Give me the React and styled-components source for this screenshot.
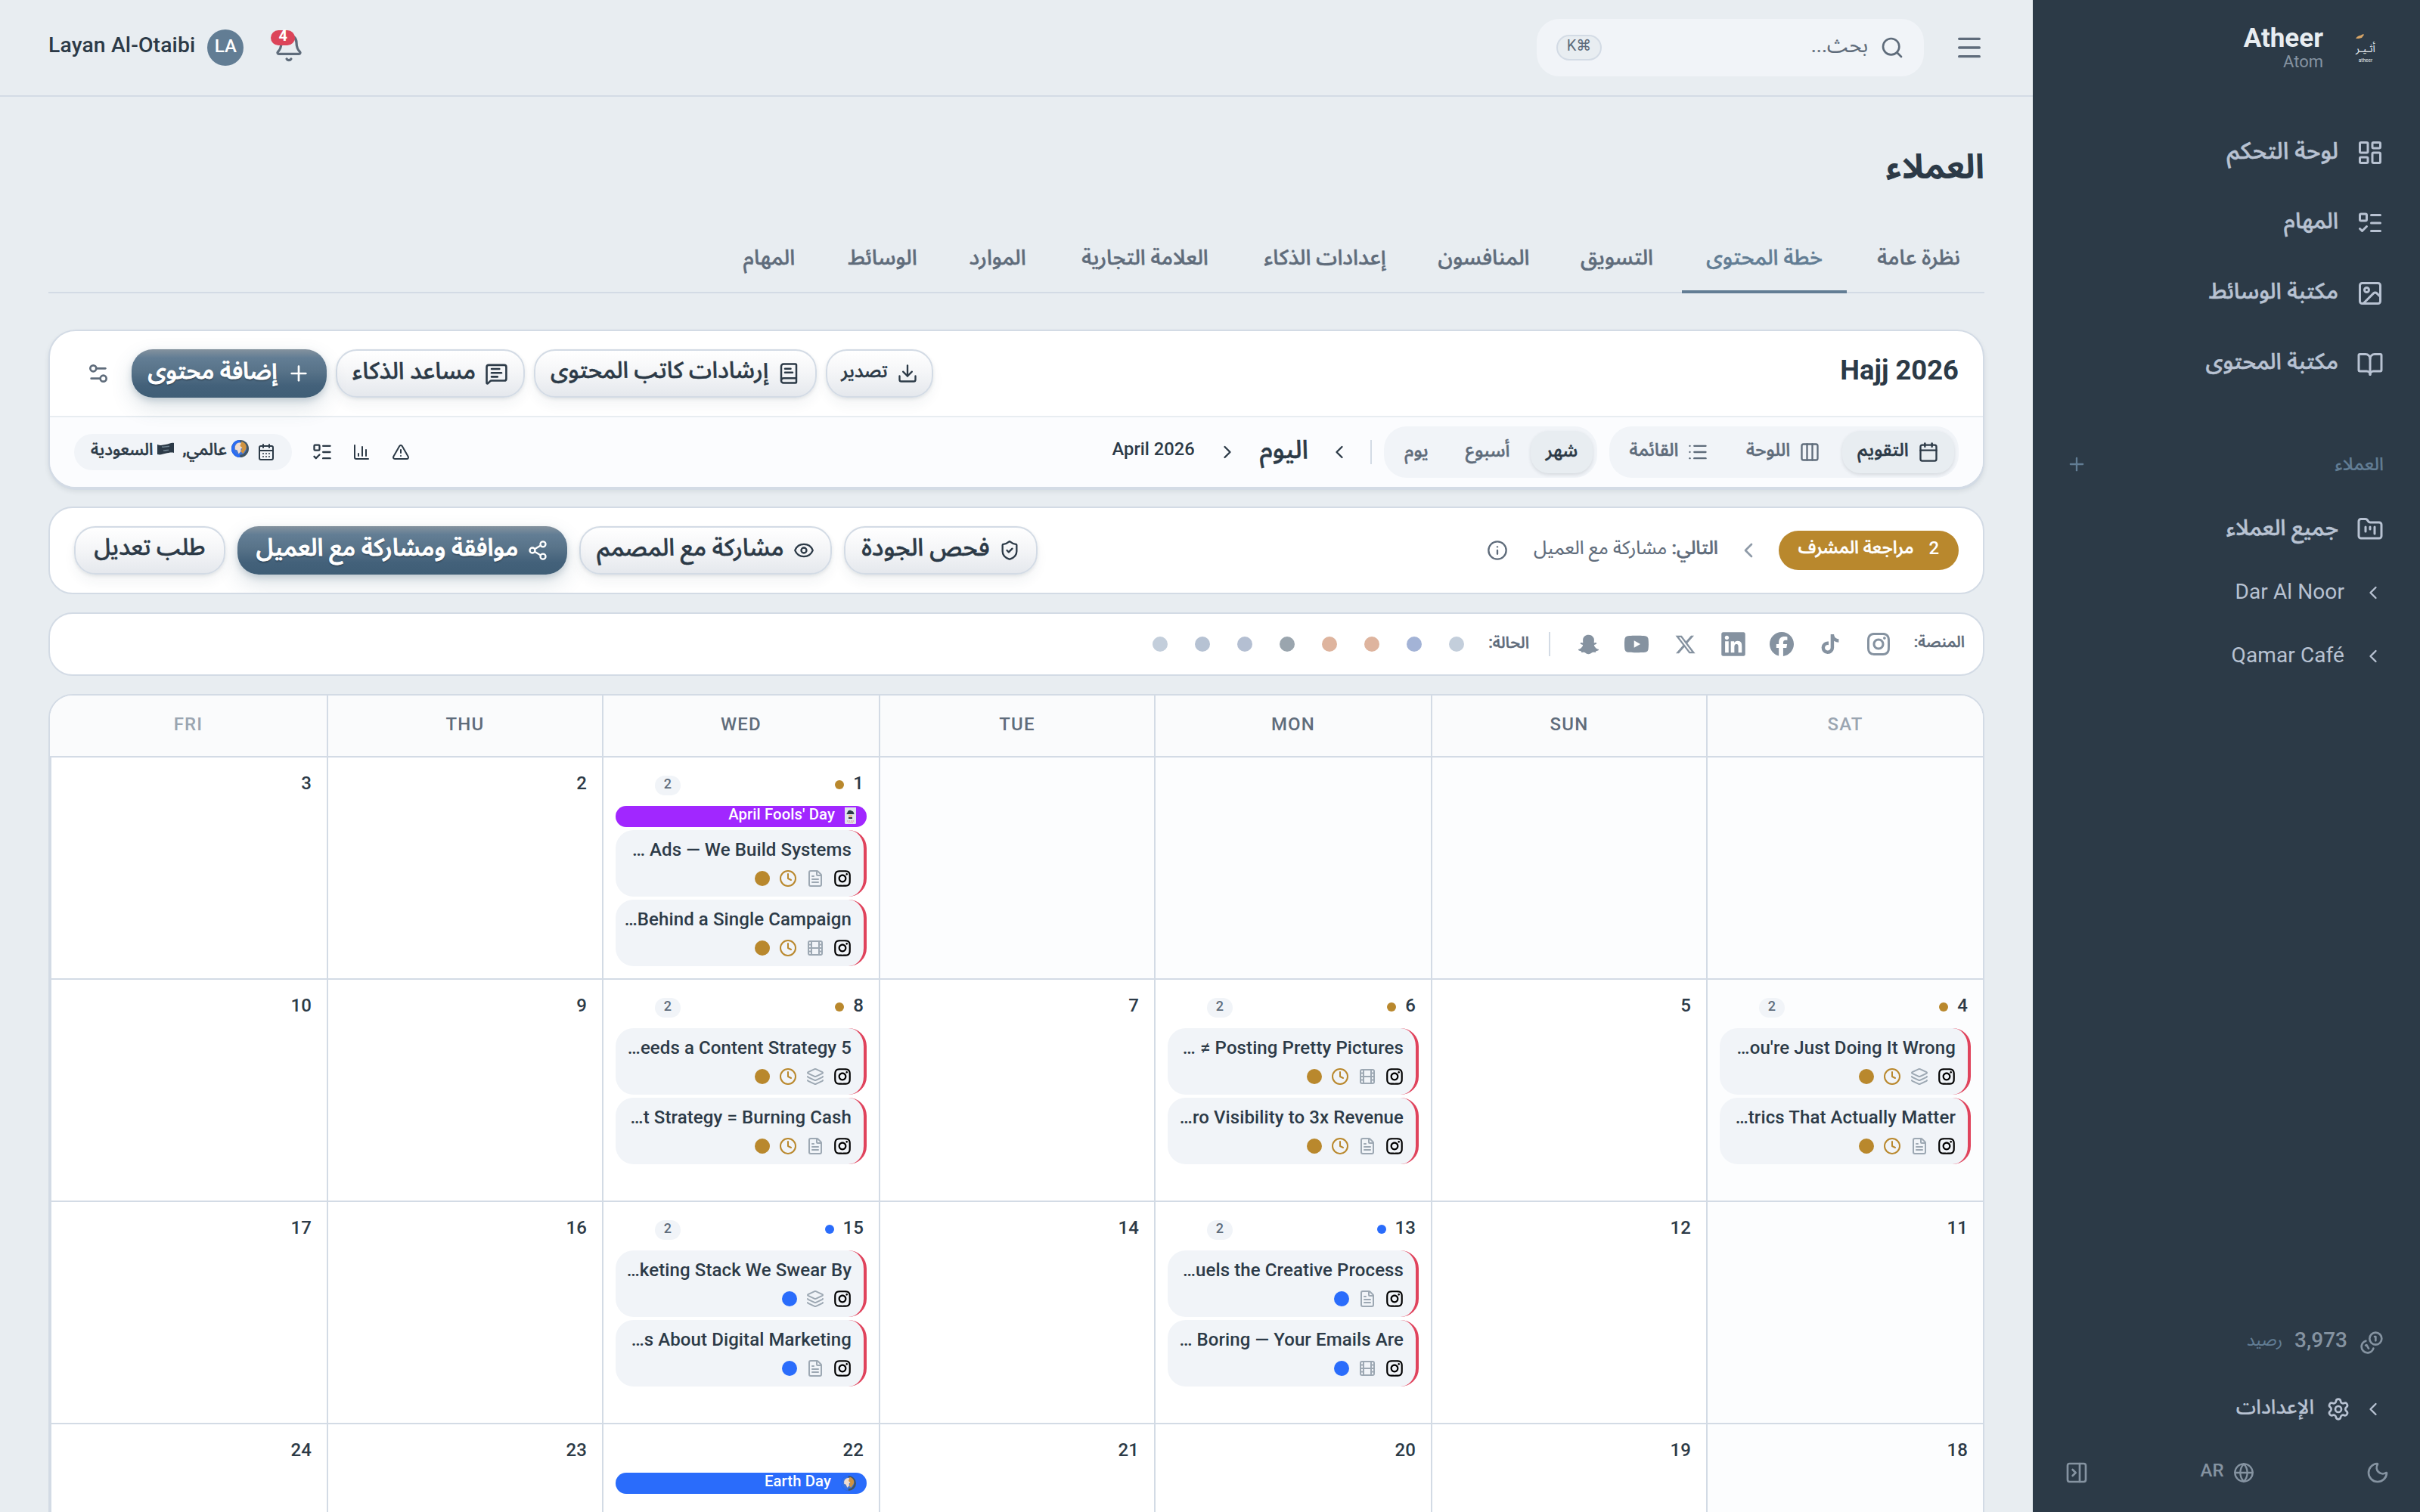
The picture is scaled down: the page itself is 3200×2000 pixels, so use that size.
import React from "react";
import styled, {createGlobalStyle, css} from "styled-components";
import {
    Bell, BookOpen, BookText, Calendar, CalendarDays, ChartColumn, ChevronLeft, ChevronRight, Clock,
    Columns3, Download, Eye, FileText, Film, FolderKanban, Globe, Image, Info, Layers, LayoutDashboard, List,
    ListTodo, Menu, MessageSquareText, Moon, PanelRightClose, Plus, Search, Settings, Settings2, Share2,
    ShieldCheck, TriangleAlert
} from "lucide-react";
import {RiInstagramLine} from "react-icons/ri";
import {FaSnapchatGhost} from "react-icons/fa";
import {FaLinkedin, FaTiktok, FaXTwitter} from "react-icons/fa6";
import {SiFacebook, SiYoutube} from "react-icons/si";


const colors = {
    ink: '#2c3a47',
    slate: '#5f6c7b',
    steel: '#627d94',
    line: '#d3dbe5',
    page: '#e8edf1',
    soft: '#f1f4f8',
    amber: '#b9882d',
    blue: '#2a6cfb',
    red: '#e0435c',
    purple: '#a127ff',
}

const GlobalStyle = createGlobalStyle`
    * {
        box-sizing: border-box;
    }

    body {
        margin: 0;
        background: ${colors.page};
        color: ${colors.ink};
        font-family: Roboto, "Noto Sans Arabic", "DejaVu Sans", sans-serif;
        font-size: 24px;
        overflow: hidden;
    }

    svg {
        flex: none;
        display: block;
    }
`

const Screen = styled.div`
    display: flex;
    width: 3200px;
    height: 2000px;
    overflow: hidden;
`

/* line box sits slightly above the centre of its row */
const Label = styled.span`
    display: block;
    flex: none;
    line-height: 1;
    padding-bottom: ${p => p.$lift ?? 0.25}em;
    white-space: nowrap;
    font-size: ${p => p.$size || 24}px;
    font-weight: ${p => p.$weight || 500};
    color: ${p => p.$color || 'inherit'};
    -webkit-text-stroke: ${p => p.$stroke ?? 0.5}px currentColor;
`

const LatinLabel = styled(Label).attrs({dir: 'ltr'})`
    letter-spacing: ${p => p.$track ?? 0.1}px;
    -webkit-text-stroke: 0;
`

const Spacer = styled.div`
    flex: 1;
`

/* ---------- sidebar ---------- */

const Sidebar = styled.aside`
    width: 512px;
    flex: none;
    display: flex;
    flex-direction: column;
    background: ${colors.ink};
    color: #b8c2d2;
`

const Brand = styled.div`
    display: flex;
    height: 128px;
    padding: 32px 44px 0 0;
`

const BrandLogo = styled.svg`
    width: 56px;
    height: 64px;
`

const BrandText = styled.div`
    display: flex;
    flex-direction: column;
    align-items: flex-start;
    margin-right: 28px;
`

const BrandName = styled.div`
    font-size: 35px;
    line-height: 38px;
    font-weight: 700;
    color: ${colors.page};
`

const BrandPlan = styled.div`
    font-size: 22px;
    line-height: 22px;
    margin-top: 1px;
    color: #8593a1;
`

const NavList = styled.nav`
    display: flex;
    flex-direction: column;
    padding: 27px 48px 0 0;
`

const NavItem = styled.a`
    display: flex;
    align-items: center;
    gap: 24px;
    height: 93.3px;
`

const SectionHead = styled.div`
    display: flex;
    align-items: center;
    justify-content: space-between;
    height: 56px;
    margin-top: 58px;
    padding: 0 48px 0 44px;
    color: ${colors.steel};
`

const ClientList = styled.div`
    display: flex;
    flex-direction: column;
    padding: 16px 48px 0 0;
`

const ClientRow = styled.a`
    display: flex;
    align-items: center;
    gap: 24px;
    height: 84px;
`

const SidebarFoot = styled.div`
    margin-top: auto;
    display: flex;
    flex-direction: column;
`

const FootRow = styled.div`
    display: flex;
    align-items: center;
    height: ${p => p.$height}px;
    gap: 16px;
    padding-right: 48px;
`

const FootBar = styled.div`
    display: flex;
    align-items: center;
    justify-content: space-between;
    height: 84px;
    margin-bottom: 10px;
    padding: 0 40px 0 42px;
    color: #8593a1;
`

const LangSwitch = styled.div`
    display: flex;
    align-items: center;
    gap: 12px;
`

/* ---------- top bar ---------- */

const Main = styled.main`
    width: 2688px;
    height: 2000px;
    flex: none;
    overflow: hidden;
`

const TopBar = styled.header`
    display: flex;
    align-items: center;
    height: 128px;
    padding: 0 64px;
    border-bottom: 2px solid ${colors.line};
    color: ${colors.slate};
`

const SearchBox = styled.div`
    display: flex;
    align-items: center;
    width: 512px;
    height: 76px;
    margin-right: 40px;
    padding: 0 26px;
    gap: 16px;
    border-radius: 30px;
    background: ${colors.soft};
`

const Kbd = styled.kbd`
    display: flex;
    align-items: center;
    justify-content: center;
    width: 60px;
    height: 34px;
    border: 2px solid ${colors.line};
    border-radius: 17px;
    background: ${colors.page};
    font-family: inherit;
`

const BellWrap = styled.div`
    position: relative;
    margin-left: 40px;
`

const BellBadge = styled.span`
    position: absolute;
    left: -4px;
    top: -3px;
    width: 32px;
    height: 20px;
    border-radius: 10px;
    background: #dc4459;
    color: #ffffff;
    font-size: 20px;
    font-weight: 700;
    line-height: 15px;
    text-align: center;
`

const Avatar = styled.div`
    display: flex;
    align-items: center;
    justify-content: center;
    width: 48px;
    height: 48px;
    margin-left: 16px;
    border-radius: 50%;
    background: ${colors.steel};
    color: #ffffff;
`

/* ---------- page ---------- */

const Page = styled.div`
    padding: 0 64px;
`

const PageTitle = styled.h1`
    margin: 0;
    height: 180px;
    padding-top: 65px;
    font-size: 45px;
    line-height: 56px;
    font-weight: 700;
`

const TabBar = styled.div`
    display: flex;
    gap: 8px;
    height: 80px;
    border-bottom: 2px solid ${colors.line};
`

const Tab = styled.a`
    display: flex;
    align-items: center;
    width: ${p => p.$width}px;
    justify-content: center;
    height: 80px;
    padding-bottom: 7px;
    color: ${p => p.$active ? colors.steel : colors.slate};
    ${p => p.$active && css`box-shadow: inset 0 -4px 0 ${colors.steel};`}
`

const Card = styled.section`
    border: 2px solid ${colors.line};
    border-radius: ${p => p.$radius || 32}px;
    background: #ffffff;
    overflow: hidden;
`

const PlanCard = styled(Card)`
    margin-top: 48px;
    height: 210px;
    box-shadow: 0 2px 0 ${colors.line}, 0 4px 6px rgba(44, 58, 71, 0.10);
`

const PlanHead = styled.div`
    display: flex;
    align-items: center;
    gap: 12px;
    height: 114px;
    padding: 0 32px;
    border-bottom: 2px solid ${colors.page};
`

const PlanTools = styled.div`
    display: flex;
    align-items: center;
    height: 92px;
    padding: 0 32px;
    background: #fbfcfe;
`

const Button = styled.button`
    display: flex;
    align-items: center;
    justify-content: center;
    flex: none;
    gap: 12px;
    width: ${p => p.$width}px;
    height: 64px;
    padding: 0;
    border: 2px solid ${colors.line};
    border-radius: 28px;
    background: linear-gradient(180deg, #ffffff 0%, #f4f5f7 50%, #e5e8ed 100%);
    box-shadow: 0 2px 4px rgba(44, 58, 71, 0.10), 0 10px 16px rgba(44, 58, 71, 0.05);
    color: ${colors.ink};
    font-family: inherit;
    ${p => p.$primary && css`
        border: none;
        background: linear-gradient(180deg, #84929e 0%, #627d94 18%, #587389 45%, #43617a 75%, #3f5e76 100%);
        box-shadow: 0 4px 8px rgba(63, 94, 118, 0.22), 0 12px 28px rgba(63, 94, 118, 0.18);
        color: #ffffff;
        text-shadow: 0 2px 2px rgba(0, 0, 0, 0.3);
    `}
`

const IconButton = styled.button`
    display: flex;
    align-items: center;
    justify-content: center;
    flex: none;
    width: ${p => p.$width || 52}px;
    height: 56px;
    padding: 0;
    border: none;
    background: none;
    color: ${p => p.$color || colors.ink};
`

const Segments = styled.div`
    display: flex;
    gap: 8px;
    height: 68px;
    padding: 6px;
    margin-left: 16px;
    border-radius: 30px;
    background: ${colors.soft};
`

const Segment = styled.div`
    display: flex;
    align-items: center;
    justify-content: center;
    gap: 12px;
    width: ${p => p.$width}px;
    height: 56px;
    border-radius: 24px;
    color: ${p => p.$active ? colors.ink : colors.slate};
    ${p => p.$active && css`
        background: ${colors.page};
        box-shadow: 0 2px 4px rgba(44, 58, 71, 0.14);
    `}
`

const VLine = styled.div`
    width: 2px;
    height: 32px;
    background: ${colors.line};
`

const RegionPill = styled.div`
    display: flex;
    align-items: center;
    width: 288px;
    height: 48px;
    margin-right: 14px;
    padding: 0 22px;
    border-radius: 24px;
    background: ${colors.soft};
`

const Region = styled.div`
    display: flex;
    align-items: center;
    gap: 6px;
    margin-right: 11px;

    svg {
        margin-bottom: 9px;
    }
`

const FlowCard = styled(Card)`
    display: flex;
    align-items: center;
    height: 116px;
    margin-top: 24px;
    padding: 0 32px;
`

const FlowButtons = styled.div`
    display: flex;
    gap: 16px;
`

const StagePill = styled.div`
    display: flex;
    align-items: center;
    justify-content: center;
    gap: 20px;
    width: 238px;
    height: 52px;
    border-radius: 26px;
    background: ${colors.amber};
    color: #ffffff;
`

const FilterCard = styled(Card)`
    display: flex;
    align-items: center;
    height: 84px;
    margin-top: 24px;
    padding: 0 24px;
`

const FilterName = styled(Label)`
    width: ${p => p.$width}px;
    margin-right: ${p => p.$gap || 0}px;
    color: ${colors.slate};
`

const PlatformList = styled.div`
    display: flex;
    width: 448px;
    margin: 0 12px 0 18px;
    color: #8592a0;
`

const Platform = styled.div`
    display: flex;
    align-items: center;
    justify-content: center;
    width: 64px;
    height: 64px;
`

const StatusList = styled.div`
    display: flex;
    gap: 36px;
    margin-right: 30px;
`

const Dot = styled.i`
    display: block;
    flex: none;
    width: ${p => p.$size || 20}px;
    height: ${p => p.$size || 20}px;
    border-radius: 50%;
    background: ${p => p.$color};
`

/* ---------- calendar ---------- */

const CalendarCard = styled(Card)`
    margin-top: 24px;
    height: 1200px;
`

const weekColumns = '366px 364px 366px 364px 366px 364px 366px'

const WeekHead = styled.div`
    display: grid;
    grid-template-columns: ${weekColumns};
    height: 82px;
    border-bottom: 2px solid ${colors.line};
    background: #fafbfc;
`

const DayName = styled.div`
    display: flex;
    align-items: center;
    justify-content: center;
    color: ${p => p.$muted ? '#9aa5b1' : colors.slate};
    border-left: 2px solid ${colors.line};

    &:last-child {
        border-left: none;
    }
`

const MonthGrid = styled.div`
    display: grid;
    grid-template-columns: ${weekColumns};
    grid-auto-rows: 294px;
`

const DayCell = styled.div`
    display: flex;
    flex-direction: column;
    gap: 4px;
    min-width: 0;
    padding: 16px;
    border-left: 2px solid ${colors.line};
    border-bottom: 2px solid ${colors.line};
    background: ${p => p.$tint ? '#fcfdfe' : '#ffffff'};
`

const DayHead = styled.div`
    display: flex;
    align-items: center;
    gap: 12px;
    flex: none;
    height: 40px;
    margin-bottom: 4px;
    padding: 0 4px 0 52px;
`

const CountBadge = styled.div`
    display: flex;
    align-items: center;
    justify-content: center;
    width: 34px;
    height: 26px;
    border-radius: 13px;
    background: ${colors.soft};
    color: ${colors.slate};
    margin-top: 2px;
`

const Holiday = styled.div`
    display: flex;
    align-items: center;
    gap: 13px;
    flex: none;
    height: 28px;
    padding: 0 14px;
    border-radius: 14px;
    background: ${p => p.$color};
    color: #ffffff;
    overflow: hidden;
`

const PostCard = styled.div`
    display: flex;
    flex-direction: column;
    align-items: flex-start;
    flex: none;
    height: 88px;
    padding: 14px 16px 0 16px;
    border-right: 4px solid ${colors.red};
    border-radius: 24px;
    background: ${colors.soft};
`

const PostMeta = styled.div`
    display: flex;
    align-items: center;
    gap: 12px;
    height: 24px;
    margin-top: 8px;
    color: #9da8b3;
`

const InstaMark = styled(RiInstagramLine)`
    width: 26px;
    height: 26px;
    margin: 0 -1px;
    color: #000000;
`

const NAV = [
    {icon: LayoutDashboard, text: 'لوحة التحكم', size: 31},
    {icon: ListTodo, text: 'المهام', size: 29.5},
    {icon: Image, text: 'مكتبة الوسائط', size: 29.5},
    {icon: BookOpen, text: 'مكتبة المحتوى', size: 29.5},
]

const TABS = [
    {text: 'نظرة عامة', width: 174},
    {text: 'خطة المحتوى', width: 218, active: true},
    {text: 'التسويق', width: 156},
    {text: 'المنافسون', width: 180},
    {text: 'إعدادات الذكاء', width: 224},
    {text: 'العلامة التجارية', width: 236},
    {text: 'الموارد', width: 138},
    {text: 'الوسائط', width: 150},
    {text: 'المهام', width: 134},
]

const VIEWS = [
    {icon: Calendar, text: 'التقويم', width: 148, active: true},
    {icon: Columns3, text: 'اللوحة', width: 140},
    {icon: List, text: 'القائمة', width: 146},
]

const RANGES = [
    {text: 'شهر', width: 82, active: true},
    {text: 'أسبوع', width: 98},
    {text: 'يوم', width: 74},
]

const STATUSES = ['#c3cedb', '#a3b3d6', '#deb49e', '#deb49e', '#9aa5ae', '#b4bfd2', '#b6c2d3', '#c3cedb']

const WEEK = ['SAT', 'SUN', 'MON', 'TUE', 'WED', 'THU', 'FRI']

const amberPosts = (items) => ({dot: colors.amber, posts: items.map(([title, icon]) => ({title, icon, late: true}))})
const bluePosts = (items) => ({dot: colors.blue, posts: items.map(([title, icon]) => ({title, icon}))})

const DAYS = {
    1: {
        holiday: {mark: 'joker', text: "April Fools' Day", color: colors.purple},
        ...amberPosts([['… Ads — We Build Systems', FileText], ['…Behind a Single Campaign', Film]]),
    },
    4: amberPosts([["…ou're Just Doing It Wrong", Layers], ['…trics That Actually Matter', FileText]]),
    6: amberPosts([['… ≠ Posting Pretty Pictures', Film], ['…ro Visibility to 3x Revenue', FileText]]),
    8: amberPosts([['…eeds a Content Strategy 5', Layers], ['…t Strategy = Burning Cash', FileText]]),
    13: bluePosts([['…uels the Creative Process', FileText], ['… Boring — Your Emails Are', Film]]),
    15: bluePosts([['…keting Stack We Swear By', Layers], ['…s About Digital Marketing', FileText]]),
    22: {holiday: {mark: 'globe', text: 'Earth Day', color: colors.blue}},
}

const EarthMark = ({size}) => (
    <svg width={size} height={size} viewBox="0 0 24 24">
        <circle cx="12" cy="12" r="12" fill="#3f5566"/>
        <path d="M12 0A12 12 0 0 0 4 21c3 2 5 3 8 3-1-8-2-16 0-24z" fill="#2a6cf5"/>
        <circle cx="12" cy="11.500" r="9" fill="#3f74d8"/>
        <path d="M5 9c1-4 5-6 8-5l2 3 1 4-3 1 0 4-3 3-2-5-3-1z" fill="#f1ddd0"/>
        <path d="M14 2c5 1 8 6 6 11l-4 6-3-3 2-5-3-3z" fill="#cf9340"/>
    </svg>
)

const FlagMark = () => (
    <svg width="22" height="17" viewBox="0 0 22 17">
        <path d="M0 3c4 1.500 7 .8 11 0S19 0 22 1v13c-3-1-7-.2-11 .8S4 17 0 16z" fill="#2c3a47"/>
        <path d="M6 6c4 1 6-.5 10-.8M8 11c3 .5 5-.6 7-.8" stroke="#6f8290" strokeWidth="1.500" fill="none"/>
    </svg>
)

const JokerMark = () => (
    <svg width="15" height="24" viewBox="0 0 15 24">
        <rect x="0" y="-2" width="15" height="24" rx="1.500" fill="#dfe5ec"/>
        <path d="M3 8c1-4 3-5 5-4s4 1 4 4l1 1H2z" fill="#2c3a47"/>
        <rect x="5" y="10" width="5" height="3" fill="#e9bd9a"/>
        <rect x="5" y="13" width="5" height="2" fill="#2c3a47"/>
        <path d="M3 18h9M5 20h6" stroke="#d98a90" strokeWidth="1.200" strokeDasharray="1.500 1"/>
    </svg>
)

/* full coin top right, the covered one bottom left */
const CoinsMark = () => (
    <svg width="32" height="32" viewBox="0 0 24 24" fill="none" stroke="#8593a1" strokeWidth="2"
         strokeLinecap="round" strokeLinejoin="round">
        <path d="M13.744 17.736a6 6 0 1 1-7.480-7.480"/>
        <path d="M15 6h1v4"/>
        <path d="m6.134 14.768.866-.5 2 3.464"/>
        <circle cx="16" cy="8" r="6"/>
    </svg>
)

const Post = ({title, icon: Icon, late}) => (
    <PostCard>
        <LatinLabel>{title}</LatinLabel>
        <PostMeta>
            <InstaMark/>
            <Icon size={24}/>
            {late && <Clock size={24} color={colors.amber}/>}
            <Dot $color={late ? colors.amber : colors.blue}/>
        </PostMeta>
    </PostCard>
)

const Day = ({number, tint}) => {
    const data = DAYS[number] || {};

    return (
        <DayCell $tint={tint}>
            {number &&
                <DayHead>
                    <LatinLabel $lift={0.15}>{number}</LatinLabel>
                    {data.dot && <Dot $size={12} $color={data.dot}/>}
                    <Spacer/>
                    {data.posts && <CountBadge><LatinLabel $size={18}>{data.posts.length}</LatinLabel></CountBadge>}
                </DayHead>
            }
            {data.holiday &&
                <Holiday $color={data.holiday.color}>
                    {data.holiday.mark === 'joker' ? <JokerMark/> : <EarthMark size={20}/>}
                    <LatinLabel $size={20.3}>{data.holiday.text}</LatinLabel>
                </Holiday>
            }
            {data.posts?.map((post) => <Post key={post.title} {...post}/>)}
        </DayCell>
    )
}

const SideNav = () => (
    <Sidebar>
        <Brand>
            <BrandLogo viewBox="0 0 56 64">
                <path d="M15 19c2-3 4-4 6-4l4-2 1 1-3 4-4 1z" fill="#d8a566"/>
                <text x="28" y="37" fontSize="14" textAnchor="middle" fill="#e8edf1" direction="rtl">أثـيـر</text>
                <text x="28" y="50" fontSize="6.500" textAnchor="middle" fill="#e8edf1" direction="ltr">atheer</text>
            </BrandLogo>
            <BrandText>
                <BrandName>Atheer</BrandName>
                <BrandPlan>Atom</BrandPlan>
            </BrandText>
        </Brand>
        <NavList>
            {NAV.map(({icon: Icon, text, size}) => (
                <NavItem key={text}>
                    <Icon size={36}/>
                    <Label $size={size} $lift={0.16}>{text}</Label>
                </NavItem>
            ))}
        </NavList>
        <SectionHead>
            <Label $size={24} $lift={0} $stroke={0.2}>العملاء</Label>
            <Plus size={28}/>
        </SectionHead>
        <ClientList>
            <ClientRow>
                <FolderKanban size={36}/>
                <Label $size={29.3} $lift={0.12}>جميع العملاء</Label>
            </ClientRow>
            {['Dar Al Noor', 'Qamar Café'].map((name) => (
                <ClientRow key={name}>
                    <ChevronLeft size={28}/>
                    <LatinLabel $size={28} $weight={400} $lift={0.12}>{name}</LatinLabel>
                </ClientRow>
            ))}
        </ClientList>
        <SidebarFoot>
            <FootRow $height={92}>
                <CoinsMark/>
                <LatinLabel $size={28} $track={0} $color="#8593a1">3,973</LatinLabel>
                <Label $size={22} $weight={400} $stroke={0.2} $color={colors.steel}>رصيد</Label>
            </FootRow>
            <FootRow $height={84}>
                <ChevronLeft size={28}/>
                <Settings size={32}/>
                <Label $size={26.5} $lift={0.22} $stroke={0.2}>الإعدادات</Label>
            </FootRow>
            <FootBar>
                <Moon size={32}/>
                <LangSwitch>
                    <Globe size={28}/>
                    <LatinLabel>AR</LatinLabel>
                </LangSwitch>
                <PanelRightClose size={32}/>
            </FootBar>
        </SidebarFoot>
    </Sidebar>
)

const Header = () => (
    <TopBar>
        <Menu size={40}/>
        <SearchBox>
            <Search size={32}/>
            <Label $size={27} $lift={0.2} $weight={400} $stroke={0.2}>بحث...</Label>
            <Spacer/>
            <Kbd><Label $size={20} $lift={0.3} $weight={400} $stroke={0}>⌘K</Label></Kbd>
        </SearchBox>
        <Spacer/>
        <BellWrap>
            <Bell size={40}/>
            <BellBadge>4</BellBadge>
        </BellWrap>
        <Avatar><LatinLabel $lift={0.15}>LA</LatinLabel></Avatar>
        <LatinLabel $size={28.3} $lift={0.17} $track={0.15} $color={colors.ink}>Layan Al-Otaibi</LatinLabel>
    </TopBar>
)

const App = () => {
    return (
        <Screen dir="rtl">
            <GlobalStyle/>
            <SideNav/>
            <Main>
                <Header/>
                <Page>
                    <PageTitle>العملاء</PageTitle>
                    <TabBar>
                        {TABS.map((tab) => (
                            <Tab key={tab.text} $width={tab.width} $active={tab.active}>
                                <Label $size={28}>{tab.text}</Label>
                            </Tab>
                        ))}
                    </TabBar>

                    <PlanCard $radius={36}>
                        <PlanHead>
                            <LatinLabel $size={36.4} $lift={0.2} $weight={700} $track={0}>Hajj 2026</LatinLabel>
                            <Spacer/>
                            <Button $width={142}><Download size={28}/><Label>تصدير</Label></Button>
                            <Button $width={374}><BookText size={30}/><Label $size={30.3}>إرشادات كاتب المحتوى</Label></Button>
                            <Button $width={250}><MessageSquareText size={31}/><Label $size={31}>مساعد الذكاء</Label></Button>
                            <Button $width={258} $primary><Plus size={32}/><Label $size={31} $stroke={0.9}>إضافة محتوى</Label></Button>
                            <IconButton $width={64} $color={colors.slate}><Settings2 size={32}/></IconButton>
                        </PlanHead>
                        <PlanTools>
                            <Segments>
                                {VIEWS.map(({icon: Icon, ...view}) => (
                                    <Segment key={view.text} $width={view.width} $active={view.active}>
                                        <Icon size={28}/>
                                        <Label>{view.text}</Label>
                                    </Segment>
                                ))}
                            </Segments>
                            <Segments>
                                {RANGES.map((range) => (
                                    <Segment key={range.text} $width={range.width} $active={range.active}>
                                        <Label $lift={0.2}>{range.text}</Label>
                                    </Segment>
                                ))}
                            </Segments>
                            <VLine/>
                            <IconButton $width={82}><ChevronLeft size={28}/></IconButton>
                            <Label $size={34}>اليوم</Label>
                            <IconButton $width={86}><ChevronRight size={28}/></IconButton>
                            <LatinLabel $size={23.7} $track={0}>April 2026</LatinLabel>
                            <Spacer/>
                            <IconButton><TriangleAlert size={24}/></IconButton>
                            <IconButton><ChartColumn size={24}/></IconButton>
                            <IconButton><ListTodo size={28}/></IconButton>
                            <RegionPill>
                                <CalendarDays size={24}/>
                                <Region>
                                    <EarthMark size={23}/>
                                    <Label $size={22}>عالمي,</Label>
                                </Region>
                                <Region>
                                    <FlagMark/>
                                    <Label $size={22}>السعودية</Label>
                                </Region>
                            </RegionPill>
                        </PlanTools>
                    </PlanCard>

                    <FlowCard>
                        <StagePill>
                            <LatinLabel>2</LatinLabel>
                            <Label $size={23.7}>مراجعة المشرف</Label>
                        </StagePill>
                        <IconButton $width={80} $color="#8f9ba8"><ChevronLeft size={32}/></IconButton>
                        <Label $size={24.7} $lift={0.2} $color={colors.slate}>التالي:&nbsp;</Label>
                        <Label $size={24.7} $lift={0.2} $weight={400} $stroke={0.2} $color={colors.slate}>مشاركة مع العميل</Label>
                        <IconButton $width={95} $color={colors.slate}><Info size={28}/></IconButton>
                        <Spacer/>
                        <FlowButtons>
                            <Button $width={256}><ShieldCheck size={28}/><Label $size={32} $lift={0.22}>فحص الجودة</Label></Button>
                            <Button $width={334}><Eye size={28}/><Label $size={31.5} $lift={0.22}>مشاركة مع المصمم</Label></Button>
                            <Button $width={436} $primary><Share2 size={28}/><Label $size={32} $lift={0.22} $stroke={0.9}>موافقة ومشاركة مع العميل</Label></Button>
                            <Button $width={200}><Label $size={30.5} $lift={0.22}>طلب تعديل</Label></Button>
                        </FlowButtons>
                    </FlowCard>

                    <FilterCard>
                        <FilterName $size={21} $width={70}>المنصة:</FilterName>
                        <PlatformList>
                            <Platform><RiInstagramLine size={36}/></Platform>
                            <Platform><FaTiktok size={26}/></Platform>
                            <Platform><SiFacebook size={32}/></Platform>
                            <Platform><FaLinkedin size={36}/></Platform>
                            <Platform><FaXTwitter size={29}/></Platform>
                            <Platform><SiYoutube size={32}/></Platform>
                            <Platform><FaSnapchatGhost size={27}/></Platform>
                        </PlatformList>
                        <VLine/>
                        <FilterName $size={21.5} $width={56} $gap={26}>الحالة:</FilterName>
                        <StatusList>
                            {STATUSES.map((color, i) => <Dot key={i} $color={color}/>)}
                        </StatusList>
                    </FilterCard>

                    <CalendarCard>
                        <WeekHead>
                            {WEEK.map((name) => (
                                <DayName key={name} $muted={name === 'SAT' || name === 'FRI'}>
                                    <LatinLabel $lift={0.2} $track={1.2}>{name}</LatinLabel>
                                </DayName>
                            ))}
                        </WeekHead>
                        <MonthGrid>
                            {Array.from({length: 28}, (_, i) => (
                                <Day key={i} number={i > 3 ? i - 3 : null} tint={i < 4 || i % 7 === 0}/>
                            ))}
                        </MonthGrid>
                    </CalendarCard>
                </Page>
            </Main>
        </Screen>
    )
}


export default App;
